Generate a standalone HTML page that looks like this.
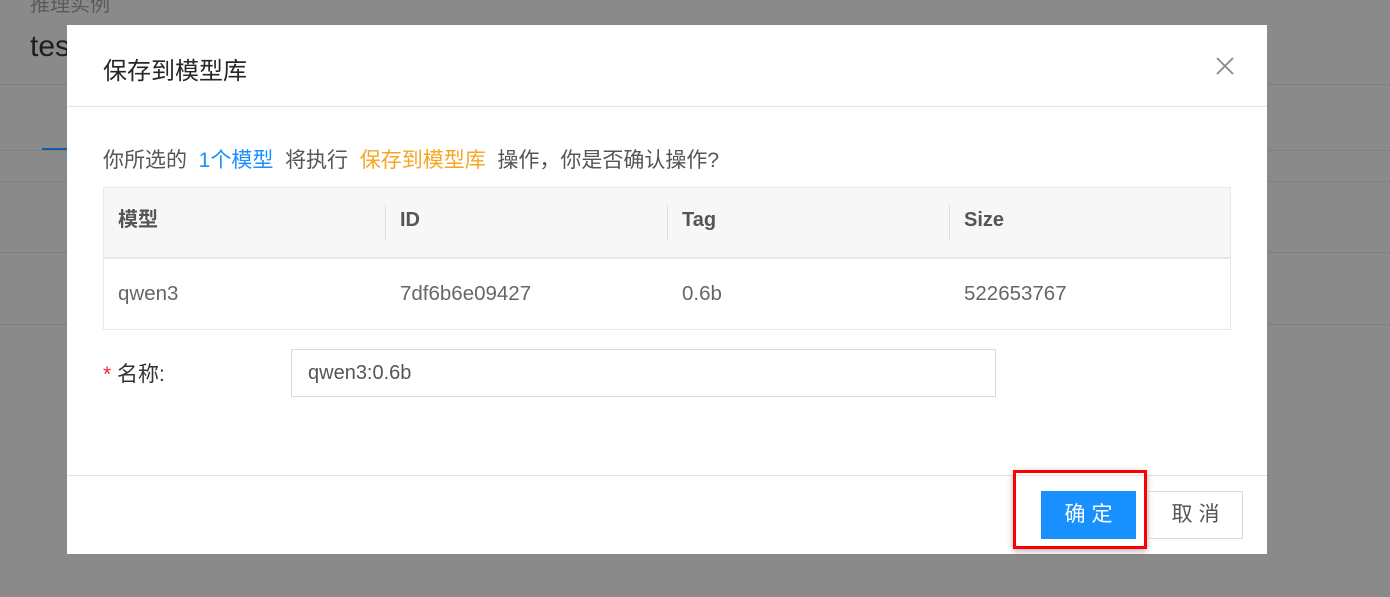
<!DOCTYPE html>
<html><head><meta charset="utf-8"><style>
*{margin:0;padding:0;box-sizing:border-box}
body{width:1390px;height:597px;overflow:hidden;background:#8a8a8a;font-family:"Liberation Sans","Noto Sans CJK SC",sans-serif;position:relative}
.a{position:absolute}
.ln{position:absolute;left:0;width:1390px;height:1px;background:#7f7f7f}
.modal{left:67px;top:25px;width:1200px;height:529px;background:#fff}
.th{position:absolute;top:0;height:71px;line-height:64px;font-weight:bold;font-size:20px;color:#555}
.td{position:absolute;top:71px;height:71px;line-height:70px;font-size:20.5px;color:#666}
.sep{position:absolute;top:17px;width:1px;height:36px;background:#ddd}
</style></head><body>
<div class="a" style="left:30px;top:-12px;font-size:20px;color:#5a5a5a">推理实例</div>
<div class="a" style="left:30px;top:30px;font-size:30px;color:#1e1e1e">tes</div>
<div class="ln" style="top:84px"></div>
<div class="a" style="left:42px;top:148px;width:30px;height:3px;background:#0f5fa8"></div>
<div class="ln" style="top:150px"></div>
<div class="ln" style="top:181px"></div>
<div class="ln" style="top:252px"></div>
<div class="ln" style="top:324px"></div>
<div class="a modal">
 <div class="a" style="left:36px;top:26px;font-size:24px;color:#262626">保存到模型库</div>
 <svg class="a" style="left:1148px;top:31px" width="20" height="20" viewBox="0 0 20 20"><path d="M2 2L18 18M18 2L2 18" stroke="#888" stroke-width="1.8"/></svg>
 <div class="a" style="left:0;top:81px;width:1200px;height:1px;background:#e5e5e5"></div>
 <div class="a" style="left:36px;top:119px;font-size:21px;color:#555;white-space:pre">你所选的  <span style="color:#1890ff">1个模型</span>  将执行  <span style="color:#f5a623">保存到模型库</span>  操作，你是否确认操作?</div>
 <div class="a" style="left:36px;top:162px;width:1128px;height:143px;border:1px solid #e8e8e8;">
  <div class="a" style="left:0;top:0;width:1126px;height:71px;background:#f7f7f7;border-bottom:2px solid #e8e8e8"></div>
  <div class="th" style="left:14px">模型</div>
  <div class="sep" style="left:281px"></div><div class="th" style="left:296px">ID</div>
  <div class="sep" style="left:563px"></div><div class="th" style="left:578px">Tag</div>
  <div class="sep" style="left:845px"></div><div class="th" style="left:860px">Size</div>
  <div class="td" style="left:14px">qwen3</div>
  <div class="td" style="left:296px">7df6b6e09427</div>
  <div class="td" style="left:578px">0.6b</div>
  <div class="td" style="left:860px">522653767</div>
 </div>
 <div class="a" style="left:36px;top:333px;font-size:21px;color:#333"><span style="color:#f5222d">*</span> 名称:</div>
 <div class="a" style="left:224px;top:324px;width:705px;height:48px;border:1px solid #d9d9d9;font-size:20px;color:#555;line-height:46px;padding-left:16px">qwen3:0.6b</div>
 <div class="a" style="left:0;top:450px;width:1200px;height:1px;background:#e5e5e5"></div>
 <div class="a" style="left:946px;top:445px;width:134px;height:79px;border:3px solid #f00;box-shadow:0 2px 6px rgba(0,0,0,.3)"></div>
 <div class="a" style="left:974px;top:466px;width:95px;height:48px;background:#1890ff;color:#fff;font-size:21px;line-height:48px;text-align:center;letter-spacing:6px;text-indent:6px">确定</div>
 <div class="a" style="left:1081px;top:466px;width:95px;height:48px;border:1px solid #d9d9d9;color:#555;font-size:21px;line-height:46px;text-align:center;letter-spacing:6px;text-indent:6px">取消</div>
</div>
</body></html>
